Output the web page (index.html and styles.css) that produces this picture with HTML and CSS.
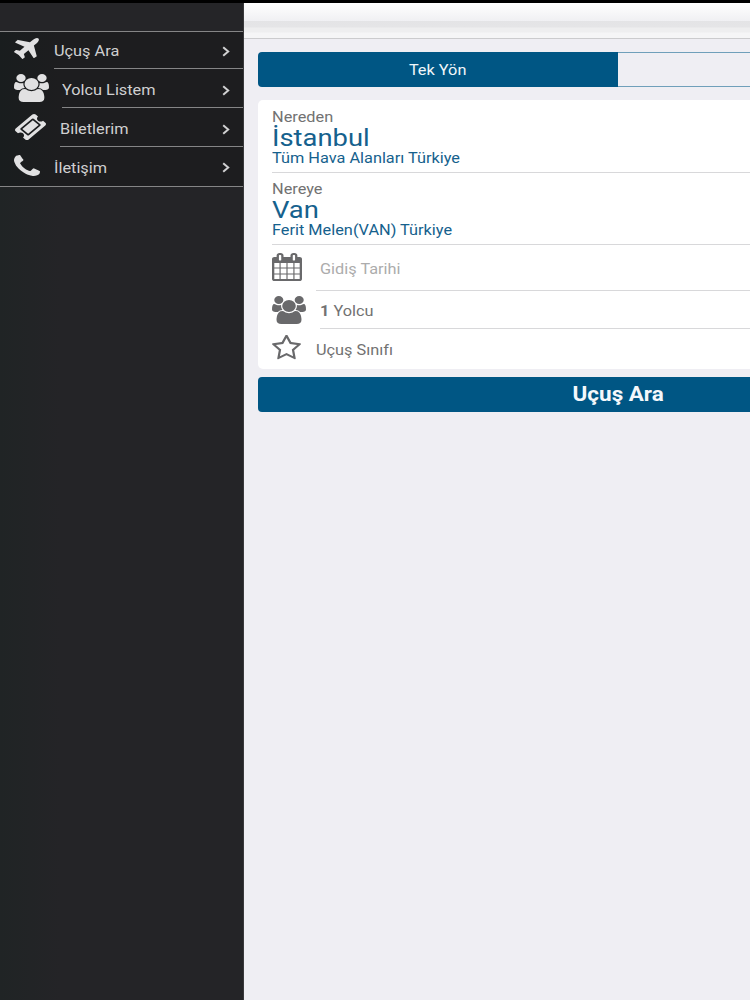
FILE: index.html
```
<!DOCTYPE html>
<html lang="tr">
<head>
<meta charset="utf-8">
<title>Uçuş Ara</title>
<link rel="stylesheet" href="styles.css">
</head>
<body>
<svg class="defs" aria-hidden="true">
  <symbol id="plane" viewBox="190 130 1410 1410" preserveAspectRatio="none"><path d="M1568 160q44 52 12 148t-108 172l-161 161 160 696q5 19-12 33l-128 96q-7 6-19 6-4 0-7-1-15-3-21-16l-279-508-259 259 53 194q5 17-8 31l-96 96q-9 9-23 9h-2q-15-2-24-13l-189-252-252-189q-11-7-13-23-1-13 9-25l96-97q9-9 23-9 6 0 8 1l194 53 259-259-508-279q-14-8-17-24-2-16 9-27l128-128q14-13 30-8l665 159 160-160q76-76 172-108t148 12z"/></symbol>
  <symbol id="users" viewBox="-64 0 1920 1792" preserveAspectRatio="none"><path d="M529 896q-162 5-265 128h-134q-82 0-138-40.500t-56-118.500q0-353 124-353 6 0 43.500 21t97.500 42.500 119 21.500q67 0 133-23-5 37-5 66 0 139 81 256zm1071 637q0 120-73 189.500t-194 69.500h-874q-121 0-194-69.500t-73-189.500q0-53 3.500-103.500t14-109 26.500-108.500 43-97.500 62-81 85.500-53.500 111.500-20q10 0 43 21.500t73 48 107 48 135 21.500 135-21.500 107-48 73-48 43-21.500q61 0 111.500 20t85.500 53.500 62 81 43 97.500 26.500 108.500 14 109 3.500 103.500zm-1024-1277q0 106-75 181t-181 75-181-75-75-181 75-181 181-75 181 75 75 181zm704 384q0 159-112.500 271.500t-271.500 112.500-271.500-112.500-112.500-271.500 112.500-271.500 271.500-112.500 271.500 112.500 112.500 271.500zm576 225q0 78-56 118.500t-138 40.500h-134q-103-123-265-128 81-117 81-256 0-29-5-66 66 23 133 23 59 0 119-21.500t97.500-42.500 43.500-21q124 0 124 353zm-128-609q0 106-75 181t-181 75-181-75-75-181 75-181 181-75 181 75 75 181z"/></symbol>
  <symbol id="ticket" viewBox="54 54 1684 1684" preserveAspectRatio="none"><path d="M1024 452l316 316-572 572-316-316zm-211 979l618-618q19-19 19-45t-19-45l-362-362q-18-18-45-18t-45 18l-618 618q-19 19-19 45t19 45l362 362q18 18 45 18t45-18zm889-637l-907 908q-37 37-90.500 37t-90.500-37l-126-126q56-56 56-136t-56-136-136-56-136 56l-125-126q-37-37-37-90.500t37-90.500l907-906q37-37 90.500-37t90.500 37l125 125q-56 56-56 136t56 136 136 56 136-56l126 125q37 37 37 90.500t-37 90.500z"/></symbol>
  <symbol id="phone" viewBox="192 128 1408 1408" preserveAspectRatio="none"><path d="M1600 1240q0 27-10 70.500t-21 68.500q-21 50-122 106-94 51-186 51-27 0-52.500-3.500t-57.500-12.500-47.500-14.500-55.500-20.500-49-18q-98-35-175-83-128-79-264.500-215.500t-215.500-264.500q-48-77-83-175-3-9-18-49t-20.500-55.500-14.500-47.500-12.500-57.500-3.500-52.500q0-92 51-186 56-101 106-122 25-11 68.500-21t70.500-10q14 0 21 3 18 6 53 76 11 19 30 54t35 63.500 31 53.500q3 4 17.500 25t21.500 35.500 7 28.500q0 20-28.500 50t-62 55-62 53-28.500 46q0 9 5 22.500t8.500 20.500 14 24 11.500 19q76 137 174 235t235 174q2 1 19 11.500t24 14 20.500 8.500 22.500 5q18 0 46-28.500t53-62 55-62 50-28.500q14 0 28.500 7t35.500 21.500 25 17.500q25 15 53.500 31t63.500 35 54 30q70 35 76 53 3 7 3 21z"/></symbol>
  <symbol id="calendar" viewBox="64 0 1664 1792" preserveAspectRatio="none"><path d="M192 1664h288v-288h-288v288zm352 0h320v-288h-320v288zm-352-352h288v-320h-288v320zm352 0h320v-320h-320v320zm-352-384h288v-288h-288v288zm736 736h320v-288h-320v288zm-384-736h320v-288h-320v288zm768 736h288v-288h-288v288zm-384-352h320v-320h-320v320zm-352-864v-288q0-13-9.500-22.500t-22.500-9.500h-64q-13 0-22.500 9.500t-9.500 22.500v288q0 13 9.500 22.500t22.500 9.500h64q13 0 22.500-9.500t9.500-22.500zm736 864h288v-320h-288v320zm-384-384h320v-288h-320v288zm384 0h288v-288h-288v288zm32-480v-288q0-13-9.500-22.500t-22.500-9.500h-64q-13 0-22.500 9.500t-9.500 22.500v288q0 13 9.500 22.500t22.500 9.500h64q13 0 22.500-9.500t9.500-22.500zm384-64v1280q0 52-38 90t-90 38h-1408q-52 0-90-38t-38-90v-1280q0-52 38-90t90-38h128v-96q0-66 47-113t113-47h64q66 0 113 47t47 113v96h384v-96q0-66 47-113t113-47h64q66 0 113 47t47 113v96h128q52 0 90 38t38 90z"/></symbol>
  <symbol id="star" viewBox="64 79 1664 1587" preserveAspectRatio="none"><path d="M1201 1004l306-297-422-62-189-382-189 382-422 62 306 297-73 421 378-199 377 199zm527-357q0 22-26 48l-363 354 86 500q1 7 1 20 0 50-41 50-19 0-40-12l-449-236-449 236q-22 12-40 12-21 0-31.500-14.500t-10.500-35.500q0-6 2-20l86-500-364-354q-25-27-25-48 0-37 56-46l502-73 225-455q19-41 49-41t49 41l225 455 502 73q56 9 56 46z"/></symbol>
  <symbol id="chevron" viewBox="0 0 8 11"><path d="M1.200 1.200L6.200 5.500L1.200 9.800" fill="none" stroke="currentColor" stroke-width="2"/></symbol>
</svg>
<div class="statusbar"></div>
<div class="app">
  <nav class="sidebar">
    <div class="sidebar-head"></div>
    <ul class="menu">
      <li class="menu-row"><svg class="icon plane"><use href="#plane"/></svg><a class="menu-link"><span class="wide">Uçuş Ara</span><svg class="chevron"><use href="#chevron"/></svg></a></li>
      <li class="menu-row"><svg class="icon users"><use href="#users"/></svg><a class="menu-link"><span class="wide">Yolcu Listem</span><svg class="chevron"><use href="#chevron"/></svg></a></li>
      <li class="menu-row"><svg class="icon ticket"><use href="#ticket"/></svg><a class="menu-link"><span class="wide">Biletlerim</span><svg class="chevron"><use href="#chevron"/></svg></a></li>
      <li class="menu-row"><svg class="icon phone"><use href="#phone"/></svg><a class="menu-link"><span class="wide">İletişim</span><svg class="chevron"><use href="#chevron"/></svg></a></li>
    </ul>
  </nav>
  <main class="main">
    <header class="topbar"></header>
    <div class="content">
      <div class="tabs"><div class="tab active"><span class="wide center">Tek Yön</span></div><div class="tab other"></div></div>
      <section class="card">
        <div class="place">
          <div class="label"><span class="wide">Nereden</span></div>
          <div class="city"><span class="wide">İstanbul</span></div>
          <div class="airport"><span class="wide">Tüm Hava Alanları Türkiye</span></div>
        </div>
        <div class="place">
          <div class="label"><span class="wide">Nereye</span></div>
          <div class="city"><span class="wide">Van</span></div>
          <div class="airport"><span class="wide">Ferit Melen(VAN) Türkiye</span></div>
        </div>
        <div class="option date"><svg class="icon calendar"><use href="#calendar"/></svg><div class="field"><span class="wide">Gidiş Tarihi</span></div></div>
        <div class="option people"><svg class="icon users"><use href="#users"/></svg><div class="field"><span class="wide"><b>1</b> Yolcu</span></div></div>
        <div class="option cabin"><svg class="icon star"><use href="#star"/></svg><div class="field"><span class="wide">Uçuş Sınıfı</span></div></div>
      </section>
      <button class="search"><span class="wide center">Uçuş Ara</span></button>
    </div>
  </main>
</div>
</body>
</html>
```
FILE: styles.css
```
* { box-sizing: border-box; }
body {
  margin: 0;
  width: 750px;
  height: 1000px;
  overflow: hidden;
  display: flex;
  flex-direction: column;
  background: #efeef3;
  font-family: Roboto, "Liberation Sans", sans-serif;
  font-size: 14px;
}
.defs { display: none; }
.statusbar { height: 3px; flex: none; background: #000; }
.app { flex: 1; display: flex; min-height: 0; }

/* Labels are set in a horizontally widened face */
.wide { display: inline-block; white-space: nowrap; transform: scaleX(1.165); transform-origin: left center; }
.wide.center { transform-origin: center; }
.icon { display: block; flex: none; fill: currentColor; }

.sidebar { width: 244px; flex: none; background: linear-gradient(90deg, #202425, #242427 25%); border-right: 1px solid #39393b; }
.sidebar-head { height: 28px; background: #252528; }
.menu {
  list-style: none;
  margin: 0;
  padding: 0;
  height: 156px;
  border-top: 1px solid #858586;
  border-bottom: 1px solid #858586;
  background: linear-gradient(90deg, #191d1e, #1d1d1f 25%);
  color: #e1e1e2;
}
.menu-row { display: flex; height: 39px; padding-left: 14px; align-items: flex-start; }
.menu-row:first-child { height: 37px; }
.menu-link { flex: 1; height: 100%; display: flex; align-items: center; justify-content: space-between; padding: 4px 13px 0 0; border-bottom: 1px solid #858586; color: #d0d0d1; }
.menu-row:first-child .menu-link, .menu-row:last-child .menu-link { padding-top: 2px; }
.menu-row:last-child .menu-link { border-bottom: 0; }
.chevron { width: 8px; height: 11px; color: #d0d0d1; }
.plane { width: 25px; height: 21px; margin: 6px 15px 0 0; }
.sidebar .users { width: 35px; height: 28px; margin: 5px 13px 0 0; }
.ticket { width: 31px; height: 26px; margin: 6px 14px 0 1px; }
.phone { width: 26px; height: 21px; margin: 8px 14px 0 0; }

.main { flex: 1; min-width: 0; overflow: hidden; }
.topbar {
  height: 36px;
  border-bottom: 1px solid #cbcbcd;
  background: linear-gradient(#fff 0, #f0f0f3 18px, #e4e4e6 18px, #e5e5e7 24px, #eeeeef 25px, #eeeeef 29px, #f5f5f6 30px, #f5f5f6 35px);
}
.content { width: 720px; margin: 13px 0 0 14px; }
.tabs { display: flex; height: 35px; }
.tab { width: 50%; display: flex; align-items: center; justify-content: center; color: #f0f6fa; }
.tab.active { background: #005684; border-radius: 4px 0 0 4px; }
.tab.other { border: 1px solid #6f9fba; border-left: 0; border-radius: 0 4px 4px 0; }
.card { height: 269px; margin-top: 13px; padding-left: 14px; background: #fff; border-radius: 5px; color: #727272; }
.place { border-bottom: 1px solid #d8d8da; height: 72px; padding-top: 8px; }
.place:first-child { height: 73px; padding-top: 9px; }
.label { height: 16px; line-height: 16px; }
.city { height: 25px; padding-top: 2px; line-height: 23px; font-size: 23.500px; color: #15618d; }
.airport { height: 15px; margin-top: 1px; line-height: 15px; font-size: 14px; color: #15618d; }
.option { display: flex; }
.field { flex: 1; display: flex; align-items: center; padding-top: 2px; border-bottom: 1px solid #d8d8da; }
.date { height: 46px; }
.date .field { padding-left: 4px; color: #acacac; }
.people { height: 38px; }
.cabin { height: 40px; }
.cabin .field { border: 0; }
.option .icon { color: #69696b; }
.calendar { width: 30px; height: 28px; margin: 8px 14px 0 0; }
.card .users { width: 34px; height: 28px; margin: 5px 14px 0 0; }
.star { width: 29px; height: 25px; margin: 6px 15px 0 0; }
.search { display: block; width: 720px; height: 35px; margin-top: 8px; padding: 0 0 1px; border: 0; border-radius: 4px; background: #005684; color: #f4f8fb; font: bold 19.300px Roboto, "Liberation Sans", sans-serif; }
```
